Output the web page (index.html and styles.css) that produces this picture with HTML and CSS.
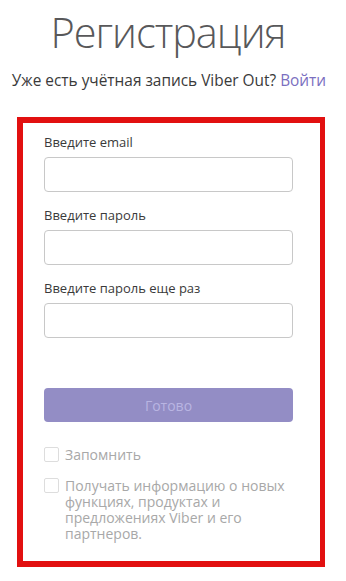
FILE: index.html
```html
<!DOCTYPE html>
<html lang="ru">
<head>
<meta charset="utf-8">
<link rel="stylesheet" href="styles.css">
</head>
<body>
<div class="page">
  <h1 class="title">Регистрация</h1>
  <p class="subtitle">Уже есть учётная запись Viber Out? <a class="login" href="#">Войти</a></p>
  <div class="box">
    <form class="form">
      <label class="label">Введите email</label>
      <input class="field" type="text">
      <label class="label">Введите пароль</label>
      <input class="field" type="password">
      <label class="label">Введите пароль еще раз</label>
      <input class="field" type="password">
      <button class="submit" type="button">Готово</button>
      <div class="check">
        <span class="box-check"></span>
        <span class="check-text">Запомнить</span>
      </div>
      <div class="check">
        <span class="box-check"></span>
        <span class="check-text">Получать информацию о новых функциях, продуктах и предложениях Viber и его партнеров.</span>
      </div>
    </form>
  </div>
</div>
</body>
</html>
```
FILE: styles.css
```css
html, body {
  margin: 0;
  padding: 0;
  background: #fff;
}
body {
  font-family: "Open Sans", "Liberation Sans", sans-serif;
  width: 346px;
  height: 581px;
  overflow: hidden;
}
.page {
  display: flex;
  flex-direction: column;
  align-items: stretch;
}
.title {
  margin: 7px 0 0 0;
  padding-right: 10px;
  font-size: 41.5px;
  font-weight: 300;
  color: #58585a;
  text-align: center;
  line-height: 50px;
  letter-spacing: -1px;
}
.subtitle {
  margin: 14px 0 0 0;
  padding-right: 8px;
  font-size: 15.4px;
  color: #3a3a3a;
  text-align: center;
  line-height: 20px;
  white-space: nowrap;
}
.login {
  color: #7b6fc0;
  text-decoration: none;
}
.box {
  margin: 26px 0 0 17px;
  width: 308px;
  height: 450px;
  box-sizing: border-box;
  border: 6px solid #e21010;
  border-right-width: 5px;
}
.form {
  display: flex;
  flex-direction: column;
  padding: 10px 0 0 21px;
}
.label {
  font-size: 13px;
  color: #3a3a3a;
  line-height: 18px;
  height: 18px;
}
.field {
  margin: 6px 0 14px 0;
  width: 249px;
  height: 35px;
  box-sizing: border-box;
  border: 1px solid #c8c8c8;
  border-radius: 4px;
  background: #fff;
  padding: 0 8px;
}
.submit {
  margin-top: 36px;
  width: 249px;
  height: 34px;
  border: none;
  border-radius: 4px;
  background: #938dc5;
  color: #b9b5e2;
  font-family: inherit;
  font-size: 14px;
  padding: 0;
}
.check {
  display: flex;
  align-items: flex-start;
  gap: 6px;
  margin-top: 25px;
  width: 252px;
}
.check + .check {
  margin-top: 15px;
}
.box-check {
  flex: 0 0 auto;
  width: 15px;
  height: 15px;
  box-sizing: border-box;
  border: 1px solid #ddd;
  border-radius: 2px;
  background: #fff;
}
.check-text {
  font-size: 14px;
  color: #a8a8a8;
  line-height: 16px;
}
```
